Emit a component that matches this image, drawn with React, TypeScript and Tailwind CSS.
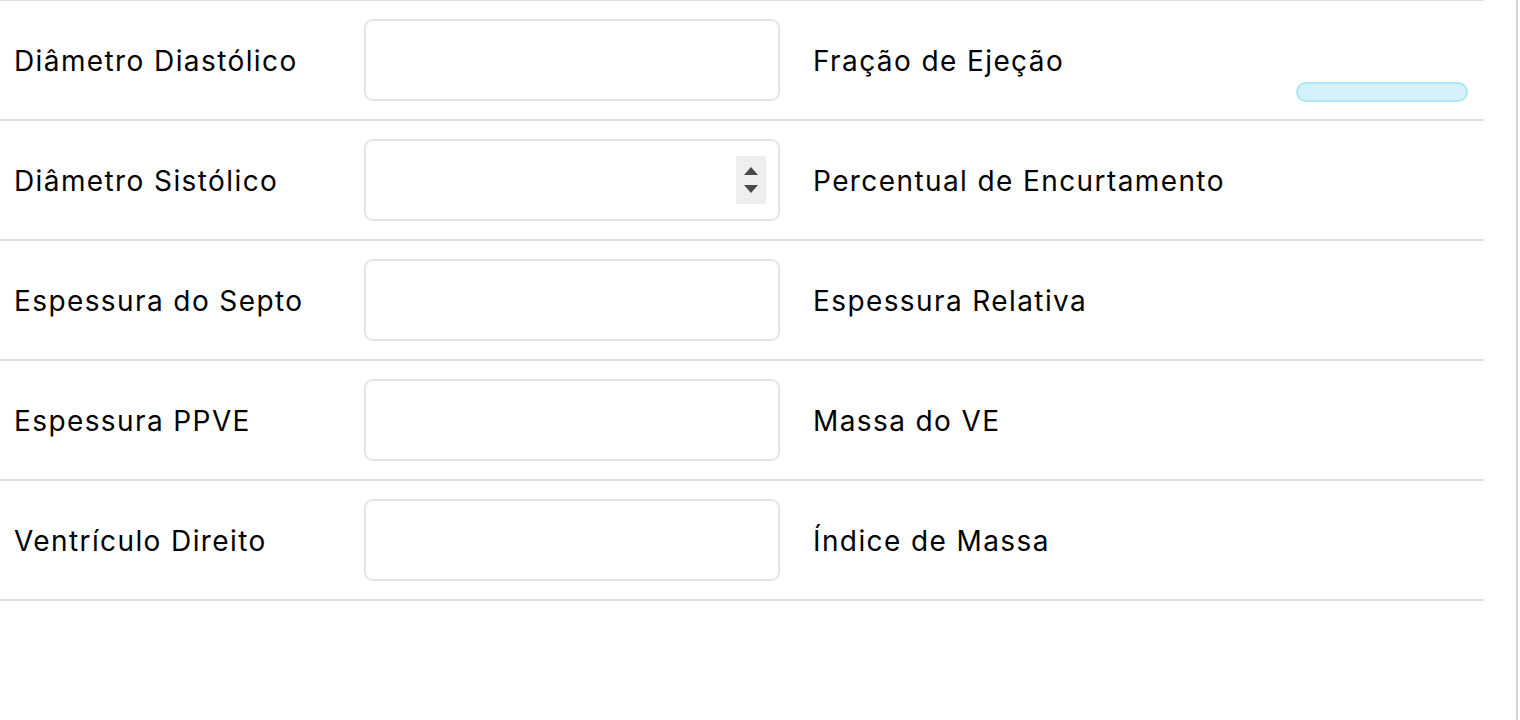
import React from "react";

const rows = [
  { label: "Diâmetro Diastólico", result: "Fração de Ejeção", bar: true, spinner: false },
  { label: "Diâmetro Sistólico", result: "Percentual de Encurtamento", bar: false, spinner: true },
  { label: "Espessura do Septo", result: "Espessura Relativa", bar: false, spinner: false },
  { label: "Espessura PPVE", result: "Massa do VE", bar: false, spinner: false },
  { label: "Ventrículo Direito", result: "Índice de Massa", bar: false, spinner: false },
];

function Spinner() {
  return (
    <div className="absolute right-[12px] top-1/2 -translate-y-1/2 flex h-[48px] w-[30px] flex-col items-center justify-center gap-[10px] bg-[#efefef]">
      <svg width="14" height="8" viewBox="0 0 14 8"><path d="M7 0 L14 8 L0 8 Z" fill="#4a4a4a" /></svg>
      <svg width="14" height="8" viewBox="0 0 14 8"><path d="M0 0 L14 0 L7 8 Z" fill="#4a4a4a" /></svg>
    </div>
  );
}

export default function App() {
  return (
    <div
      className="relative h-[720px] w-[1520px] overflow-hidden bg-white text-black"
      style={{ fontFamily: "Inter, 'Liberation Sans', sans-serif" }}
    >
      <div className="mt-[-1px] w-[1484px] border-t-2 border-[#dee2e6]">
        {rows.map((r) => (
          <div key={r.label} className="flex h-[120px] border-b-2 border-[#dee2e6]">
            <div className="flex w-[348px] items-center pl-[14px] pt-[2px] text-[28px] tracking-[1.4px]">{r.label}</div>
            <div className="flex w-[448px] items-center px-[16px]">
              <div className="relative h-[82px] w-[416px] rounded-[9px] border-2 border-[#e2e4e7] bg-white">
                {r.spinner && <Spinner />}
              </div>
            </div>
            <div className="relative flex flex-1 items-center pl-[17px] pt-[2px] text-[28px] tracking-[1.4px]">
              {r.result}
              {r.bar && (
                <div className="absolute bottom-[17px] right-[16px] h-[20px] w-[172px] rounded-full border-2 border-[#abe7f5] bg-[#d5f2fa]" />
              )}
            </div>
          </div>
        ))}
      </div>
      <div className="absolute right-[2px] top-0 h-full w-[2px] bg-[#d4d4d4]" />
    </div>
  );
}
